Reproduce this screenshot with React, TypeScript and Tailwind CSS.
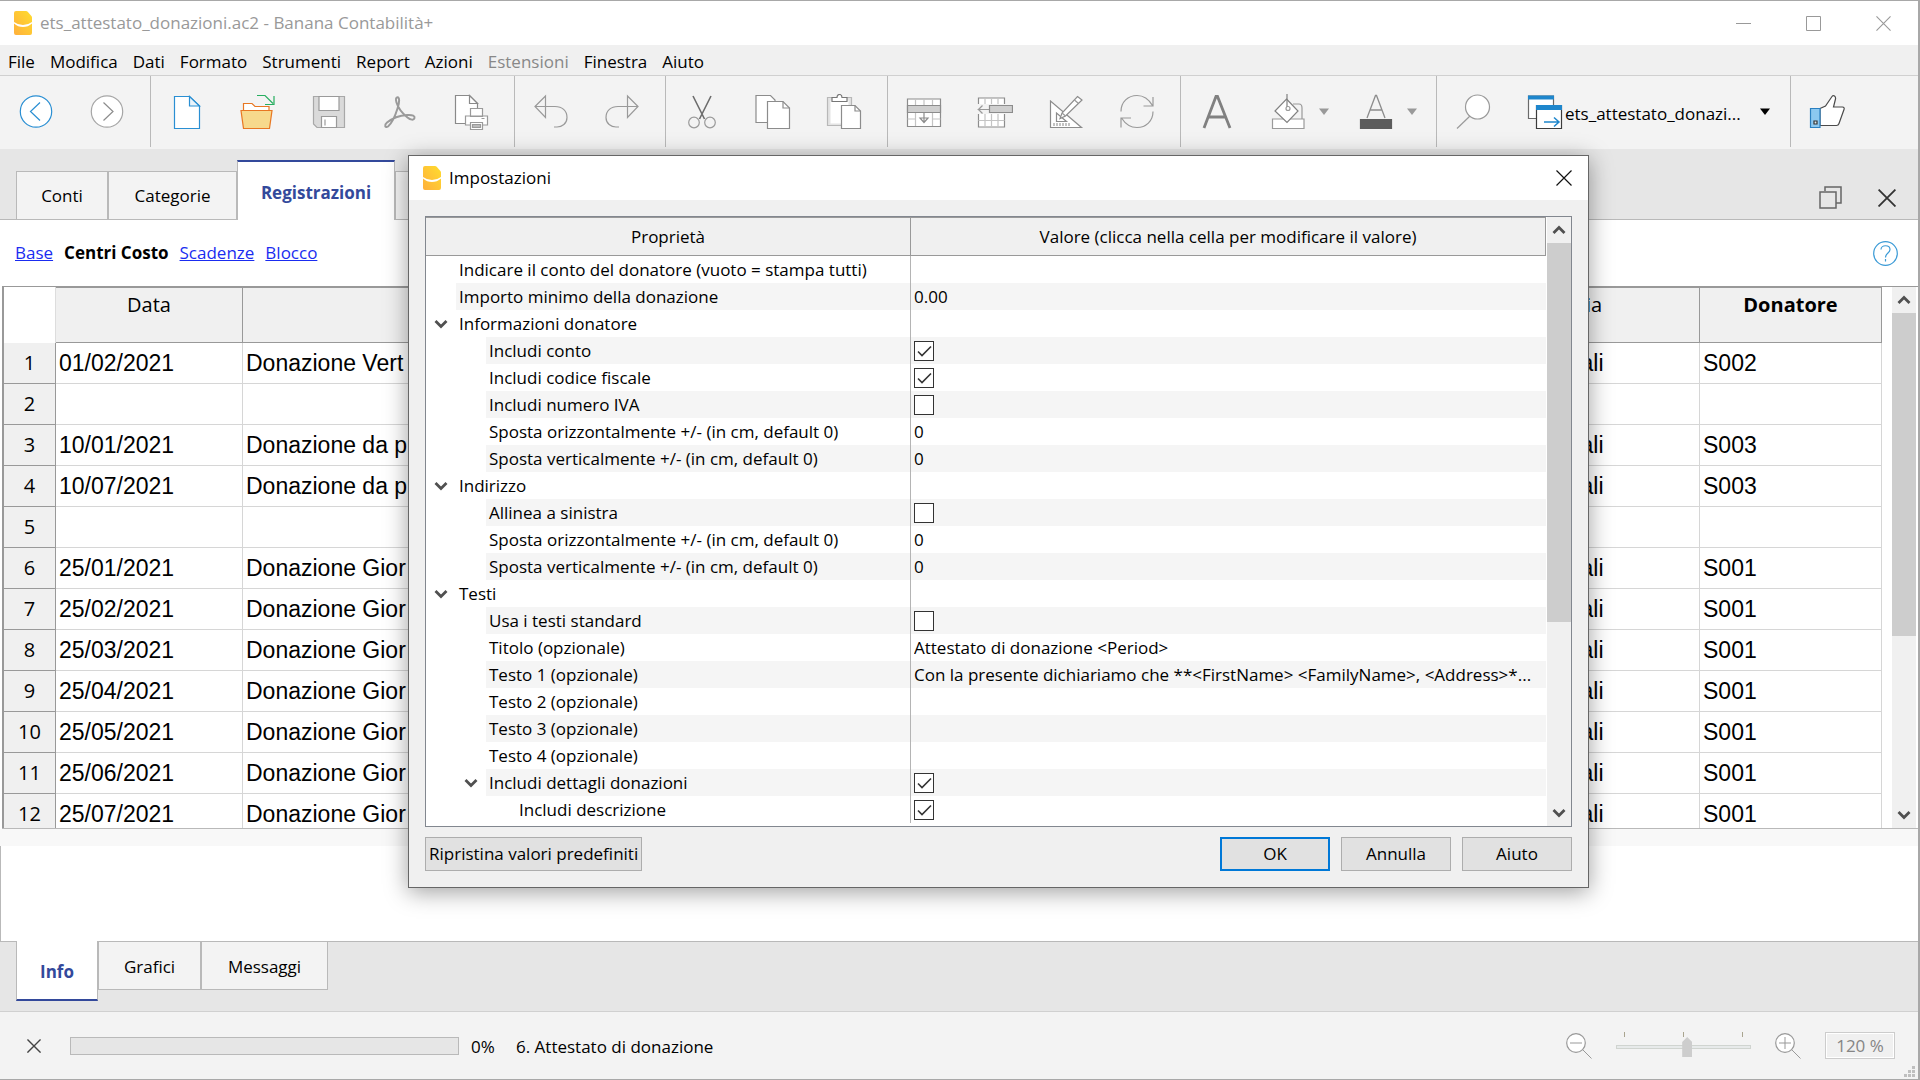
import React, { useState } from "react";

const ui = "font-['Open_Sans','Noto_Sans',sans-serif]";

function Logo() {
  return (
    <svg width="18" height="24" viewBox="0 0 18 24" aria-hidden="true">
      <defs>
        <linearGradient id="bananaFill" x1="1" y1="0" x2="0" y2="1">
          <stop offset="0" stopColor="#ffdc2e" />
          <stop offset="1" stopColor="#ffb03c" />
        </linearGradient>
      </defs>
      <path
        d="M2 0h10q1 0 1.700.8L17.400 5q.6.700.6 1.500V22q0 2-2 2H2q-2 0-2-2V2Q0 0 2 0Z"
        fill="url(#bananaFill)"
      />
      <path d="M0 11q4 3 9 3t9-3v1.500q-4 3.500-9 3.500t-9-3.500Z" fill="#fff" />
    </svg>
  );
}

function Icon({ children }: { children: React.ReactNode }) {
  return (
    <svg width="36" height="36" viewBox="0 0 36 36" fill="none" stroke="#9a9a9a" strokeWidth="1.200" aria-hidden="true">
      {children}
    </svg>
  );
}

const icons = {
  back: (
    <Icon>
      <circle cx="18" cy="17.500" r="15.700" stroke="#2a8fd3" fill="#fff" />
      <path d="M22 8.500 12.500 17.500 22 26.500" stroke="#2a8fd3" />
    </Icon>
  ),
  forward: (
    <Icon>
      <circle cx="18" cy="17.500" r="15.700" fill="#fff" stroke="#a6a6a6" />
      <path d="M14.500 8.500 24 17.500l-9.500 9" stroke="#8c8c8c" />
    </Icon>
  ),
  file: (
    <Icon>
      <path d="M5.500 2.500h15l10 9.500v22.500h-25Z" fill="#fff" stroke="#2a8fd3" />
      <path d="M20.500 2.500V12h10Z" fill="#eaf4fb" stroke="#2a8fd3" />
    </Icon>
  ),
  open: (
    <Icon>
      <path d="M3.500 16V9.500h8.500l3 3h14V16" fill="#fff" stroke="#e87722" />
      <path d="M1 16.500h31l-2.500 18h-26Z" fill="#f7d98c" stroke="#e87722" />
      <path d="M17 1.500h8l8 8M34 2v8.500h-9" stroke="#27ae60" />
    </Icon>
  ),
  save: (
    <Icon>
      <path d="M2.500 2.500h31v31H6l-3.500-3.500Z" fill="#dadada" stroke="#a8a8a8" />
      <path d="M8 2.500h20v14H8Z" fill="#fff" />
      <path d="M10.500 22.500h15v11h-15Z" fill="#fff" />
      <path d="M14 25.500v6" />
    </Icon>
  ),
  pdf: (
    <Icon>
      <path
        d="M15 3.500c3-1 2.500 5 .5 11-2 6.500-6 15-9.500 18-3 2-4-1.500-1-4 5-4 13-7 20-7.500 6-.4 8 1 7.500 3-.6 2.500-4 2-7-.5-5-4-9.500-10-11-15-.8-2.800-.7-4.600.5-5Z"
        strokeWidth="2"
      />
    </Icon>
  ),
  print: (
    <Icon>
      <path d="M2.500 1.500h14l8 8v20h-22Z" fill="#fff" stroke="#8a8a8a" />
      <path d="M16.500 1.500v8h8Z" fill="#fff" stroke="#8a8a8a" />
      <path d="M17.500 14.500h12v8h-12ZM12.500 22h22v9h-22Z" fill="#fff" />
      <path d="M17.500 28.500h12v7h-12Z" fill="#fff" />
      <path d="M19.500 30.500h8v3h-8ZM28.500 24.500h3" fill="#bbb" />
    </Icon>
  ),
  undo: (
    <Icon>
      <path d="M2 12.500 12.500 2v21.500Z" />
      <path d="M2 12.500h20c7 0 12 4 12 11 0 6-5 9.500-10 9.500h-3" />
    </Icon>
  ),
  redo: (
    <Icon>
      <path d="M34 12.500 23.500 2v21.500Z" />
      <path d="M34 12.500H14c-7 0-12 4-12 11 0 6 5 9.500 10 9.500h3" />
    </Icon>
  ),
  cut: (
    <Icon>
      <path d="M9 2 20.500 25M27 2 15.500 25" stroke="#6c6c6c" strokeWidth="1.600" />
      <circle cx="10" cy="28.500" r="5.300" />
      <circle cx="26" cy="28.500" r="5.300" />
    </Icon>
  ),
  copy: (
    <Icon>
      <path d="M1 1.500h14.500L20 6v22.500H1Z" fill="#fff" stroke="#8c8c8c" />
      <path d="M12.500 7.500H28l6.500 6.500v20.500h-22Z" fill="#fff" stroke="#8c8c8c" />
      <path d="M28 7.500V14h6.500" stroke="#8c8c8c" />
    </Icon>
  ),
  paste: (
    <Icon>
      <path d="M1.500 3.500h24v28h-24Z" fill="#e4e4e4" stroke="#b8b8b8" />
      <path d="M4.500 6.500h18v23h-18Z" fill="#fff" stroke="none" />
      <path d="M6 7.500v-4h5c0-4 5-4 5 0h5v4Z" fill="#fff" stroke="#777" />
      <path d="M15.500 11.500H29l5.500 5.500v17.500h-19Z" fill="#fff" stroke="#8c8c8c" />
      <path d="M29 11.500V17h5.500" stroke="#8c8c8c" />
    </Icon>
  ),
  addRow: (
    <Icon>
      <path d="M1.500 5h33v27.500h-33Z" fill="#fff" stroke="#8c8c8c" />
      <path d="M9.500 5v27M18 5v7M26.500 5v27M1.500 25h8M26.500 25h8" stroke="#c4c4c4" />
      <path d="M1.500 11.500h33v7h-33Z" fill="#cfcfcf" stroke="#8c8c8c" />
      <path d="M18 19v9M14 24l4 4.500 4-4.500Z" stroke="#8c8c8c" />
    </Icon>
  ),
  delRow: (
    <Icon>
      <path d="M1.500 4h26v29h-26Z" fill="#fff" stroke="#8c8c8c" />
      <path d="M8 4v29M14.500 4v29M21 4v29M1.500 26.500h26" stroke="#c4c4c4" />
      <path d="M0 10h29v10H0Z" fill="#f3f3f3" stroke="none" />
      <path d="M12.500 11.500h23v7h-23Z" fill="#cfcfcf" stroke="#8c8c8c" />
      <path d="M12 15.500H1.500l4-4M1.500 15.500l4 4" />
    </Icon>
  ),
  design: (
    <Icon>
      <path d="M2.500 7v26.500h31Z" fill="#fff" stroke="#8c8c8c" />
      <path d="M8.500 19v8.500h10Z" stroke="#8c8c8c" />
      <path d="M6 29v3M9 29v3M12 29v3M15 29v3M18 29v3M21 29v3" />
      <path d="M29.500 2.500 34 6 17.500 22 12 24.500l2-5.500Z" fill="#fff" stroke="#8c8c8c" />
      <path d="m26.500 6 4 3.500M14 19l3.500 3" />
    </Icon>
  ),
  refresh: (
    <Icon>
      <path d="M2 17.500C2 8 9 1.500 18 1.500c7 0 12 4 15.500 10M34 3v9h-9.500" />
      <path d="M34 17.500C34 27 27 33.500 18 33.500c-7 0-12-4-15.500-9.500M2 33.500V24h10" />
    </Icon>
  ),
  font: (
    <Icon>
      <path d="M5 34 17 2.500h1.500L31 34M9.500 23h17" stroke="#808080" strokeWidth="2.800" />
    </Icon>
  ),
  fill: (
    <Icon>
      <path d="M23 10h6c2 0 3 1 3 4v11" />
      <path d="M2.500 25h31.500v9.500h-31.500Z" fill="#fff" />
      <path d="M16.500 5 28 17 17 28.500 5 17Z" fill="#fff" stroke="#808080" />
      <path d="M17 0v13" stroke="#808080" />
      <circle cx="18" cy="14.500" r="2" />
    </Icon>
  ),
  textColor: (
    <Icon>
      <path d="M9 24 17.500 1.500h1L27 24M12 16h12" stroke="#8c8c8c" strokeWidth="1.300" />
      <path d="M2.500 25.500h31v9h-31Z" fill="#5c5c5c" stroke="#5c5c5c" />
    </Icon>
  ),
  search: (
    <Icon>
      <circle cx="22.500" cy="13" r="12" fill="#fff" />
      <path d="M15 22 2 34.500" />
    </Icon>
  ),
  windows: (
    <Icon>
      <path d="M1.500 2h25v22.500h-25Z" fill="#fff" stroke="#6a6a6a" />
      <path d="M1 1.500h26v4H1Z" fill="#1e86cc" stroke="none" />
      <path d="M9.500 11.500h25v23h-25Z" fill="#fff" stroke="#3c3c3c" />
      <path d="M9 11h26v5H9Z" fill="#1e86cc" stroke="none" />
      <path d="M17 28h15M27 23.500l5 4.500-5 4.500" stroke="#1e86cc" strokeWidth="1.500" />
    </Icon>
  ),
  like: (
    <Icon>
      <path
        d="M11 14.500 16.500 12 23 2.500c1.500-2 4 0 3.500 2.500L24.500 13h9c1.500 0 2 1 1.500 2.500l-5 14c-.5 1.500-1 2-2.500 2H11Z"
        fill="#fff"
        stroke="#4a4a4a"
      />
      <path d="M1.500 14.500H11v19H1.500Z" fill="#8cc8f0" stroke="#2a7fc0" />
      <path d="M5 27h3v3H5Z" stroke="#333" fill="#d8e8f0" />
    </Icon>
  ),
};

function ToolButton({ icon, label }: { icon: keyof typeof icons; label: string }) {
  return (
    <button aria-label={label} className="flex w-[71px] shrink-0 items-center justify-center">
      {icons[icon]}
    </button>
  );
}

function Caret({ dark = false }: { dark?: boolean }) {
  return (
    <svg width="10" height="7" viewBox="0 0 10 7" aria-hidden="true">
      <path d="M0 0.500h10L5 7Z" fill={dark ? "#000" : "#999"} />
    </svg>
  );
}

function Group({ children }: { children: React.ReactNode }) {
  return <div className="flex items-stretch border-r border-[#b9b9b9] pr-2">{children}</div>;
}

function Chevron({ up = false }: { up?: boolean }) {
  return (
    <svg width="14" height="10" viewBox="0 0 14 10" fill="none" stroke="#505050" strokeWidth="2.800" aria-hidden="true">
      <path d={up ? "M1.500 8 7 2.500 12.500 8" : "M1.500 2 7 7.500 12.500 2"} />
    </svg>
  );
}

function Cross({ size, color, width = 1.2 }: { size: number; color: string; width?: number }) {
  return (
    <svg width={size} height={size} viewBox="0 0 16 16" stroke={color} strokeWidth={width} aria-hidden="true">
      <path d="M.5.5l15 15M15.500.5l-15 15" />
    </svg>
  );
}

function ScrollBar({ thumb }: { thumb: string }) {
  return (
    <div className="flex w-6 shrink-0 flex-col bg-[#f0f0f0]">
      <button aria-label="Scorri su" className="flex h-[26px] items-center justify-center">
        <Chevron up />
      </button>
      <div className="min-h-0 flex-1">
        <div className={"bg-[#cdcdcd] " + thumb} />
      </div>
      <button aria-label="Scorri giù" className="flex h-[26px] items-center justify-center">
        <Chevron />
      </button>
    </div>
  );
}

const menus = ["File", "Modifica", "Dati", "Formato", "Strumenti", "Report", "Azioni", "Estensioni", "Finestra", "Aiuto"];

const entries = [
  ["01/02/2021", "Donazione Vert", "Erogazioni liberali", "S002"],
  ["", "", "", ""],
  ["10/01/2021", "Donazione da p", "Erogazioni liberali", "S003"],
  ["10/07/2021", "Donazione da p", "Erogazioni liberali", "S003"],
  ["", "", "", ""],
  ["25/01/2021", "Donazione Gior", "Erogazioni liberali", "S001"],
  ["25/02/2021", "Donazione Gior", "Erogazioni liberali", "S001"],
  ["25/03/2021", "Donazione Gior", "Erogazioni liberali", "S001"],
  ["25/04/2021", "Donazione Gior", "Erogazioni liberali", "S001"],
  ["25/05/2021", "Donazione Gior", "Erogazioni liberali", "S001"],
  ["25/06/2021", "Donazione Gior", "Erogazioni liberali", "S001"],
  ["25/07/2021", "Donazione Gior", "Erogazioni liberali", "S001"],
];

type Setting = { level: 0 | 1 | 2; label: string; value?: string | boolean; open?: boolean };

const settings: Setting[] = [
  { level: 0, label: "Indicare il conto del donatore (vuoto = stampa tutti)" },
  { level: 0, label: "Importo minimo della donazione", value: "0.00" },
  { level: 0, label: "Informazioni donatore", open: true },
  { level: 1, label: "Includi conto", value: true },
  { level: 1, label: "Includi codice fiscale", value: true },
  { level: 1, label: "Includi numero IVA", value: false },
  { level: 1, label: "Sposta orizzontalmente +/- (in cm, default 0)", value: "0" },
  { level: 1, label: "Sposta verticalmente +/- (in cm, default 0)", value: "0" },
  { level: 0, label: "Indirizzo", open: true },
  { level: 1, label: "Allinea a sinistra", value: false },
  { level: 1, label: "Sposta orizzontalmente +/- (in cm, default 0)", value: "0" },
  { level: 1, label: "Sposta verticalmente +/- (in cm, default 0)", value: "0" },
  { level: 0, label: "Testi", open: true },
  { level: 1, label: "Usa i testi standard", value: false },
  { level: 1, label: "Titolo (opzionale)", value: "Attestato di donazione <Period>" },
  { level: 1, label: "Testo 1 (opzionale)", value: "Con la presente dichiariamo che **<FirstName> <FamilyName>, <Address>*..." },
  { level: 1, label: "Testo 2 (opzionale)" },
  { level: 1, label: "Testo 3 (opzionale)" },
  { level: 1, label: "Testo 4 (opzionale)" },
  { level: 1, label: "Includi dettagli donazioni", value: true, open: true },
  { level: 2, label: "Includi descrizione", value: true },
];

const indent = ["w-[30px]", "w-[60px]", "w-[90px]"];

function SettingRow({ row, index }: { row: Setting; index: number }) {
  const [on, setOn] = useState(row.value === true);
  const id = "setting-" + index;
  const stripe = index % 2 === 1 ? "bg-[#f5f5f5]" : "bg-white";
  const isCheck = typeof row.value === "boolean";
  return (
    <tr className="h-[27px]">
      <td className="border-r border-[#b4b4b4] p-0">
        <div className="flex h-[27px]">
          <div className={"flex shrink-0 items-center justify-end pr-2 " + indent[row.level]}>
            {row.open && (
              <button aria-label={"Comprimi " + row.label}>
                <Chevron />
              </button>
            )}
          </div>
          <label htmlFor={isCheck ? id : undefined} className={"flex-1 truncate pl-[3px] leading-[27px] " + stripe}>
            {row.label}
          </label>
        </div>
      </td>
      <td className={"p-0 pl-[3px] " + stripe}>
        {isCheck ? (
          <span className="grid size-5">
            <input
              id={id}
              type="checkbox"
              checked={on}
              onChange={() => setOn(!on)}
              className="col-start-1 row-start-1 size-5 appearance-none border border-[#333] bg-white"
            />
            {on && (
              <svg viewBox="0 0 20 20" className="pointer-events-none col-start-1 row-start-1 size-5" fill="none" stroke="#333" strokeWidth="1.600" aria-hidden="true">
                <path d="m4 10.500 4 4L17 5.500" />
              </svg>
            )}
          </span>
        ) : (
          <span className="block truncate">{row.value}</span>
        )}
      </td>
    </tr>
  );
}

function SettingsDialog() {
  const plain = "h-[34px] w-[110px] border border-[#adadad] bg-[#e1e1e1]";
  return (
    <div
      role="dialog"
      aria-label="Impostazioni"
      className="absolute left-[408px] top-[154px] flex h-[733px] w-[1181px] flex-col border border-[#666] bg-[#f0f0f0] shadow-[0_4px_22px_rgba(0,0,0,0.38)]"
    >
      <div className="flex h-11 shrink-0 items-center bg-white pl-[14px] pr-4">
        <Logo />
        <h2 className="flex-1 pl-2">Impostazioni</h2>
        <button aria-label="Chiudi finestra">
          <Cross size={16} color="#111" />
        </button>
      </div>
      <div className="mx-4 mt-4 flex min-h-0 flex-1 border border-[#82878f] bg-white">
        <div className="min-w-0 flex-1 overflow-hidden pr-px">
          <table className="w-full table-fixed border-separate border-spacing-0">
            <colgroup>
              <col className="w-[485px]" />
              <col />
            </colgroup>
            <thead>
              <tr className="h-[39px] bg-[#f0f0f0]">
                <th className="border-b border-r border-t border-[#999] p-0 font-normal">Proprietà</th>
                <th className="border-b border-r border-t border-[#999] p-0 font-normal">
                  Valore (clicca nella cella per modificare il valore)
                </th>
              </tr>
            </thead>
            <tbody>
              {settings.map((row, i) => (
                <SettingRow key={i} row={row} index={i} />
              ))}
            </tbody>
          </table>
        </div>
        <ScrollBar thumb="h-[68%]" />
      </div>
      <div className="mx-4 mb-4 mt-[10px] flex shrink-0 gap-[11px]">
        <button className="mr-auto h-[34px] border border-[#adadad] bg-[#e1e1e1] px-[3px]">Ripristina valori predefiniti</button>
        <button className="h-[34px] w-[110px] border-2 border-[#0078d7] bg-[#e1e1e1]">OK</button>
        <button className={plain}>Annulla</button>
        <button className={plain}>Aiuto</button>
      </div>
    </div>
  );
}

function ZoomGlass({ plus = false }: { plus?: boolean }) {
  return (
    <svg width="26" height="26" viewBox="0 0 26 26" fill="none" stroke="#999" aria-hidden="true">
      <circle cx="10" cy="10" r="9.300" fill="#fff" strokeWidth="1.200" />
      <path d="M17 17l8.500 8.500M4 10h12" />
      {plus && <path d="M10 4v12" />}
    </svg>
  );
}

export default function App() {
  const tab = "border border-[#b9b9b9] bg-[#f3f3f3]";
  const head = "border-b border-r border-t border-[#999] bg-[#f0f0f0] p-0";
  return (
    <div className={"relative flex h-screen min-h-[900px] flex-col overflow-hidden border-r-2 border-b border-t border-[#a8a8a8] bg-white text-[17px] leading-6 text-black " + ui}>
      <header className="flex h-11 shrink-0 items-center pl-[14px] text-[#999]">
        <Logo />
        <h1 className="flex-1 pl-2">ets_attestato_donazioni.ac2 - Banana Contabilità+</h1>
        <button aria-label="Riduci a icona" className="flex h-full w-[70px] items-center justify-center">
          <svg width="15" height="15" stroke="#999" aria-hidden="true"><path d="M0 7.500h15" /></svg>
        </button>
        <button aria-label="Ingrandisci" className="flex h-full w-[70px] items-center justify-center">
          <svg width="15" height="15" stroke="#999" fill="none" aria-hidden="true"><path d="M.5.500h14v14H.5Z" /></svg>
        </button>
        <button aria-label="Chiudi" className="flex h-full w-[70px] items-center justify-center">
          <Cross size={15} color="#999" />
        </button>
      </header>

      <nav className="flex h-[31px] shrink-0 items-center gap-[15px] border-b border-[#d0d0d0] bg-[#f0f0f0] pl-2 pt-[3px]">
        {menus.map((m) => (
          <button key={m} disabled={m === "Estensioni"} className="disabled:text-[#888]">
            {m}
          </button>
        ))}
      </nav>

      <div className="flex h-[73px] shrink-0 bg-[#f3f3f3] pb-[2px]">
        <Group>
          <ToolButton icon="back" label="Indietro" />
          <ToolButton icon="forward" label="Avanti" />
        </Group>
        <Group>
          <ToolButton icon="file" label="Nuovo" />
          <ToolButton icon="open" label="Apri" />
          <ToolButton icon="save" label="Salva" />
          <ToolButton icon="pdf" label="Crea PDF" />
          <ToolButton icon="print" label="Stampa" />
        </Group>
        <Group>
          <ToolButton icon="undo" label="Annulla modifica" />
          <ToolButton icon="redo" label="Ripeti" />
        </Group>
        <Group>
          <ToolButton icon="cut" label="Taglia" />
          <ToolButton icon="copy" label="Copia" />
          <ToolButton icon="paste" label="Incolla" />
        </Group>
        <Group>
          <ToolButton icon="addRow" label="Aggiungi righe" />
          <ToolButton icon="delRow" label="Elimina righe" />
          <ToolButton icon="design" label="Imposta colonne" />
          <ToolButton icon="refresh" label="Ricalcola" />
        </Group>
        <Group>
          <ToolButton icon="font" label="Carattere" />
          <ToolButton icon="fill" label="Colore sfondo" />
          <button aria-label="Scegli colore sfondo" className="-ml-1 w-[21px]"><Caret /></button>
          <ToolButton icon="textColor" label="Colore testo" />
          <button aria-label="Scegli colore testo" className="-ml-1 w-[21px]"><Caret /></button>
        </Group>
        <Group>
          <ToolButton icon="search" label="Cerca" />
          <button className="flex w-[274px] items-center gap-[2px] pl-[19px]">
            {icons.windows}
            <span className="flex-1 pt-1 text-left">ets_attestato_donazi...</span>
            <span className="pr-3"><Caret dark /></span>
          </button>
        </Group>
        <ToolButton icon="like" label="Mi piace" />
      </div>

      <div className="flex h-[71px] shrink-0 items-end bg-[#e6e6e6] shadow-[inset_0_-1px_0_#b9b9b9]">
        <div role="tablist" className="flex items-end pl-4">
          <button role="tab" aria-selected={false} className={tab + " h-[49px] w-[92px]"}>Conti</button>
          <button role="tab" aria-selected={false} className={tab + " h-[49px] w-[129px]"}>Categorie</button>
          <button role="tab" aria-selected className="h-[60px] w-[158px] border-x border-t-2 border-x-[#b9b9b9] border-t-[#33499b] bg-white pt-1 font-bold text-[#33499b]">
            Registrazioni
          </button>
          <button role="tab" aria-selected={false} aria-label="Altra tabella" className={tab + " h-[49px] w-[129px]"} />
        </div>
        <div className="ml-auto flex items-center gap-9 pb-[11px] pr-[22px]">
          <button aria-label="Ripristina finestra">
            <svg width="23" height="23" fill="none" stroke="#666" strokeWidth="1.500" aria-hidden="true">
              <path d="M6 5V1h16v16h-5M1 6h16v16H1Z" />
            </svg>
          </button>
          <button aria-label="Chiudi tabella"><Cross size={18} color="#333" width={1.6} /></button>
        </div>
      </div>

      <div className="flex h-[66px] shrink-0 items-center gap-[11px] pl-[15px] pr-5">
        <a href="#base" className="text-[#1a2cf0] underline">Base</a>
        <strong>Centri Costo</strong>
        <a href="#scadenze" className="text-[#1a2cf0] underline">Scadenze</a>
        <a href="#blocco" className="text-[#1a2cf0] underline">Blocco</a>
        <button aria-label="Guida" className="ml-auto">
          <svg width="25" height="25" fill="none" stroke="#3a9ad6" strokeWidth="1.200" aria-hidden="true">
            <circle cx="12.500" cy="12.500" r="11.800" />
            <path d="M8 8.500c0-5 9-5 9 0 0 3.500-4.500 3.500-4.500 8M12.500 18v2.500" />
          </svg>
        </button>
      </div>

      <div className="ml-[2px] flex min-h-0 flex-1 border-b border-t border-b-[#b9b9b9] border-t-[#999] pr-[2px]">
        <div className="min-w-0 flex-1 overflow-hidden pr-[10px]">
          <table className="w-full table-fixed border-separate border-spacing-0 border-l-2 border-[#999]">
            <colgroup>
              <col className="w-[52px]" />
              <col className="w-[187px]" />
              <col />
              <col className="w-[300px]" />
              <col className="w-[182px]" />
            </colgroup>
            <thead>
              <tr className="h-[56px] align-top text-[20px] leading-[34px]">
                <th className="border-r border-[#ddd] bg-white p-0" />
                <th className={head + " font-normal"}>Data</th>
                <th className={head + " font-normal"} />
                <th className={head + " pl-4 font-normal"}>Categoria</th>
                <th className={head + " font-bold"}>Donatore</th>
              </tr>
            </thead>
            <tbody>
              {entries.map((cells, i) => (
                <tr key={i} className="h-[41px]">
                  <th className="border-b border-r border-[#999] bg-[#f0f0f0] p-0 text-[20px] font-normal">{i + 1}</th>
                  {cells.map((cell, j) => (
                    <td
                      key={j}
                      className={
                        "overflow-hidden whitespace-nowrap border-b border-r border-[#d6d6d6] p-0 font-['Liberation_Sans',Arial,sans-serif] text-[23px] " +
                        (j === 2 ? "pl-[22px]" : "pl-[3px]")
                      }
                    >
                      {cell}
                    </td>
                  ))}
                </tr>
              ))}
            </tbody>
          </table>
        </div>
        <ScrollBar thumb="h-[66%]" />
      </div>

      <div className="h-[17px] shrink-0 bg-[#f8f8f8]" />
      <div className="h-[95px] shrink-0 border-l border-[#b9b9b9] bg-white" />

      <div className="flex h-[71px] shrink-0 items-start border-b border-[#d0d0d0] bg-[#e6e6e6] pl-4 shadow-[inset_0_1px_0_#b9b9b9]" role="tablist">
        <button role="tab" aria-selected className="h-[60px] w-[82px] border-x border-b-2 border-x-[#b9b9b9] border-b-[#33499b] bg-white pt-1 font-bold text-[#33499b]">
          Info
        </button>
        <button role="tab" aria-selected={false} className={tab + " h-[49px] w-[103px] pt-[2px]"}>Grafici</button>
        <button role="tab" aria-selected={false} className={tab + " h-[49px] w-[127px] pt-[2px]"}>Messaggi</button>
      </div>

      <footer className="relative flex h-[67px] shrink-0 items-center bg-[#f3f3f3] pl-[27px] pr-[23px]">
        <button aria-label="Interrompi"><Cross size={14} color="#444" width={1.6} /></button>
        <div role="progressbar" aria-label="Avanzamento" aria-valuenow={0} aria-valuemin={0} aria-valuemax={100} className="ml-[29px] h-[18px] w-[389px] border border-[#b9b9b9] bg-[#e6e6e6]" />
        <span className="ml-3 w-[45px] pt-[2px]">0%</span>
        <span className="pt-[2px]">6. Attestato di donazione</span>
        <button aria-label="Riduci zoom" className="ml-auto"><ZoomGlass /></button>
        <div className="mx-6 flex h-[27px] flex-col">
          <div className="flex h-[5px] justify-between px-2" aria-hidden="true">
            <i className="w-px bg-[#a9a48f]" />
            <i className="w-px bg-[#a9a48f]" />
            <i className="w-px bg-[#a9a48f]" />
          </div>
          <input
            type="range"
            aria-label="Zoom"
            min={0}
            max={100}
            defaultValue={53}
            className="h-5 w-[135px] appearance-none bg-transparent [&::-webkit-slider-runnable-track]:h-1 [&::-webkit-slider-runnable-track]:border [&::-webkit-slider-runnable-track]:border-[#d0d4d0] [&::-webkit-slider-runnable-track]:bg-[#e7eaea] [&::-webkit-slider-thumb]:-mt-[9px] [&::-webkit-slider-thumb]:h-5 [&::-webkit-slider-thumb]:w-[10px] [&::-webkit-slider-thumb]:appearance-none [&::-webkit-slider-thumb]:bg-[#cdcdcd] [&::-webkit-slider-thumb]:[clip-path:polygon(50%_0,100%_25%,100%_100%,0_100%,0_25%)]"
          />
        </div>
        <button aria-label="Aumenta zoom"><ZoomGlass plus /></button>
        <button className="ml-6 flex h-[27px] w-[70px] items-center justify-center border border-[#ccc] bg-[#f0f0f0] text-[#858585] shadow-[inset_0_0_0_1px_#fff]">
          120 %
        </button>
        <svg width="11" height="11" className="absolute bottom-[2px] right-[3px]" fill="#bfbfbf" aria-hidden="true">
          <path d="M0 8h3v3H0ZM4 8h3v3H4ZM8 8h3v3H8ZM4 4h3v3H4ZM8 4h3v3H8ZM8 0h3v3H8Z" />
        </svg>
      </footer>

      <SettingsDialog />
    </div>
  );
}
